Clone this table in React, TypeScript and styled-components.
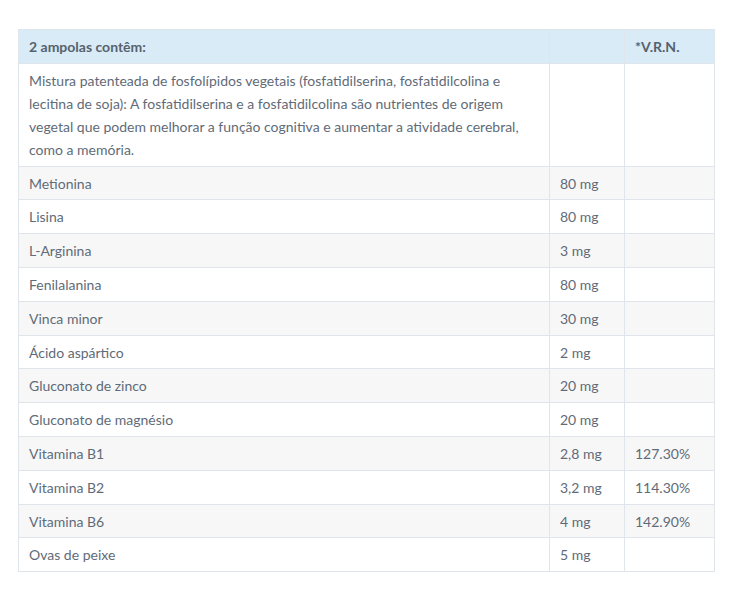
import React from "react";
import styled, { createGlobalStyle } from "styled-components";

const Global = createGlobalStyle`
  html, body { margin: 0; padding: 0; background: #ffffff; }
  body { font-family: Lato, "Open Sans", sans-serif; }
`;

const Page = styled.div`
  padding: 29px 19px 0 18px;
`;

const Table = styled.table`
  width: 696px;
  border-collapse: collapse;
  table-layout: fixed;
  font-family: Lato, "Open Sans", sans-serif;
  font-size: 14px;
  line-height: 23px;
  color: #5f6b78;
`;

const Col = styled.col<{ $w: number }>`
  width: ${(p) => p.$w}px;
`;

const HeadCell = styled.th`
  background: #d9ebf6;
  border: 1px solid #dfe5eb;
  padding: 5px 10px 4.8px;
  text-align: left;
  font-weight: 700;
  color: #56626e;
`;

const Row = styled.tr<{ $striped: boolean }>`
  background: ${(p) => (p.$striped ? "#f7f7f7" : "#ffffff")};
`;

const Cell = styled.td`
  border: 1px solid #dfe5eb;
  padding: 5px 10px 4.8px;
  vertical-align: top;
  font-weight: 400;
`;

const rows: [string, string, string][] = [
  [
    "Mistura patenteada de fosfolípidos vegetais (fosfatidilserina, fosfatidilcolina e lecitina de soja): A fosfatidilserina e a fosfatidilcolina são nutrientes de origem vegetal que podem melhorar a função cognitiva e aumentar a atividade cerebral, como a memória.",
    "",
    "",
  ],
  ["Metionina", "80 mg", ""],
  ["Lisina", "80 mg", ""],
  ["L-Arginina", "3 mg", ""],
  ["Fenilalanina", "80 mg", ""],
  ["Vinca minor", "30 mg", ""],
  ["Ácido aspártico", "2 mg", ""],
  ["Gluconato de zinco", "20 mg", ""],
  ["Gluconato de magnésio", "20 mg", ""],
  ["Vitamina B1", "2,8 mg", "127.30%"],
  ["Vitamina B2", "3,2 mg", "114.30%"],
  ["Vitamina B6", "4 mg", "142.90%"],
  ["Ovas de peixe", "5 mg", ""],
];

export default function App() {
  return (
    <>
      <Global />
      <Page>
        <Table>
          <colgroup>
            <Col $w={531} />
            <Col $w={75} />
            <Col $w={90} />
          </colgroup>
          <thead>
            <tr>
              <HeadCell>2 ampolas contêm:</HeadCell>
              <HeadCell></HeadCell>
              <HeadCell>*V.R.N.</HeadCell>
            </tr>
          </thead>
          <tbody>
            {rows.map((r, i) => (
              <Row key={i} $striped={i % 2 === 1}>
                <Cell>{r[0]}</Cell>
                <Cell>{r[1]}</Cell>
                <Cell>{r[2]}</Cell>
              </Row>
            ))}
          </tbody>
        </Table>
      </Page>
    </>
  );
}
